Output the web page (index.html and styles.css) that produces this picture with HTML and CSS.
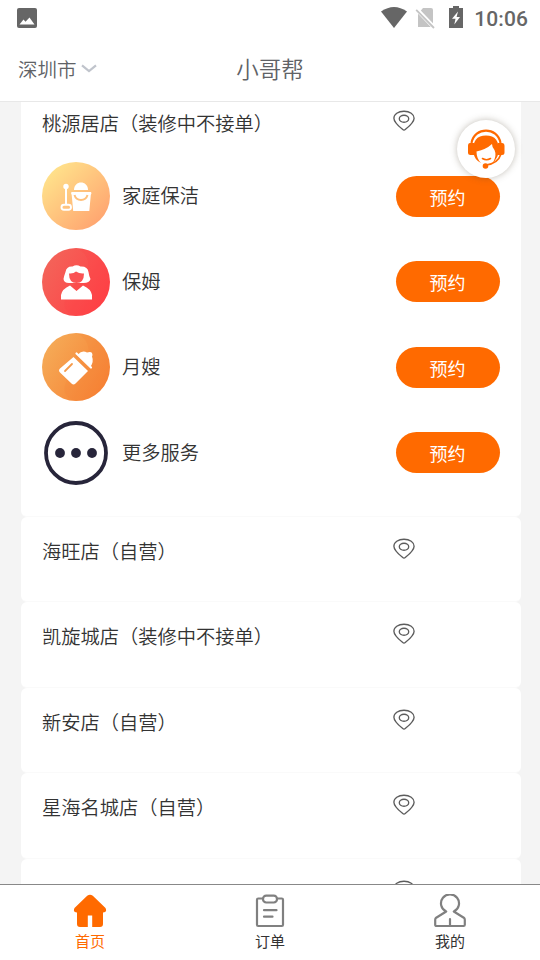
FILE: index.html
```html
<!DOCTYPE html>
<html lang="zh-CN">
<head>
<meta charset="utf-8">
<title>小哥帮</title>
<link rel="stylesheet" href="styles.css">
</head>
<body>
<svg class="defs" width="0" height="0" aria-hidden="true">
  <symbol id="pin" viewBox="0 0 22 21">
    <path d="M11 1.200C5.200 1.200.9 4.200.9 8.200c0 4.200 5 8.200 8.800 11.300q1.300 1 2.600 0c3.800-3.100 8.800-7.100 8.800-11.300 0-4-4.300-7-10.100-7z"/>
    <ellipse cx="11" cy="8.700" rx="4.700" ry="3.500"/>
  </symbol>
</svg>
<div class="app">
  <div class="status">
    <svg class="pic" viewBox="0 0 20 20"><rect width="20" height="20" rx="2" fill="#666"/><path d="M2.500 16.500l4-5 2 2.300L12.500 9.500l5 7z" fill="#fff"/></svg>
    <svg class="wifi" viewBox="0 0 26 21"><path d="M0 4.500Q13-4.500 26 4.500L13 21z" fill="#666"/></svg>
    <svg class="sim" viewBox="0 0 20 21"><path d="M2 6l5-6h8q2 0 2 2v17H2z" fill="#c4c4c4"/><path d="M-.5 0L20 21.500" stroke="#fff" stroke-width="4"/><path d="M.2 1.800L18 20" stroke="#c4c4c4" stroke-width="1.800"/></svg>
    <svg class="battery" viewBox="0 0 14 22"><path d="M0 2h4V0h6v2h4v20H0z" fill="#666"/><path d="M9 5.500L3 12.800h3.500L5.300 18.500 11 11H7.600z" fill="#fff"/></svg>
    <span class="time">10:06</span>
  </div>
  <header class="header">
    <div class="city"><span>深圳市</span><svg viewBox="0 0 16 9"><path d="M1 1.300l7 5.800 7-5.800"/></svg></div>
    <h1>小哥帮</h1>
  </header>
  <main class="list">
    <section class="card open">
      <div class="store"><span>桃源居店（装修中不接单）</span><svg class="pin"><use href="#pin"/></svg></div>
      <div class="service">
        <svg class="avatar" viewBox="0 0 68 68">
          <defs><linearGradient id="g1" x1="0.150" y1="0.150" x2="0.850" y2="0.850"><stop stop-color="#ffe08a"/><stop offset="1" stop-color="#ffa771"/></linearGradient></defs>
          <circle cx="34" cy="34" r="34" fill="url(#g1)"/>
          <g fill="#fff"><circle cx="24" cy="24.500" r="2.700"/><path d="M23 24h2v18h-2z"/><path d="M32 28c0-10 14-10 14 0z"/><path d="M29.500 30h19.500q1 1-.200 3L47.300 49H31.200L29.700 33q-1.200-2-.2-3z"/></g>
          <rect x="19.500" y="42.700" width="9.500" height="5" rx="2.500" fill="none" stroke="#fff" stroke-width="1.900"/>
          <path d="M32.500 33q1.500 5 6.500 5t6.500-5" fill="none" stroke="#ffc17d" stroke-width="2"/>
        </svg>
        <span class="name">家庭保洁</span><button>预约</button>
      </div>
      <div class="service">
        <svg class="avatar" viewBox="0 0 68 68">
          <defs><linearGradient id="g2" x1="0" y1="0.200" x2="1" y2="0.800"><stop stop-color="#f3655a"/><stop offset="1" stop-color="#ff3e44"/></linearGradient></defs>
          <circle cx="34" cy="34" r="34" fill="url(#g2)"/>
          <path d="M34 0c12 5 16 17 9 26S20 45 23 60q3 6 11 8C78 66 79 2 34 0z" fill="#ff3f48" opacity=".2"/>
          <path d="M28 35q-6 .500-6.500-4 .500-3 2-7 1-6 7-5.500 4-2.500 8 0 7-.500 8 5.500 .500 4 2 7-1 4-7 4z" fill="#fff"/>
          <path d="M27 25.500q4.500.500 7-2 3.500 2.500 8 2Q42 35 34.500 35T27 25.500z" fill="#fa5354"/>
          <path d="M19 51.500V47q1-6 9-9.500l6.500 5.500L41 37.500q8 3.500 9 9.500v4.500z" fill="#fff"/>
        </svg>
        <span class="name">保姆</span><button>预约</button>
      </div>
      <div class="service">
        <svg class="avatar" viewBox="0 0 68 68">
          <defs><linearGradient id="g3" x1="0" y1="0.200" x2="1" y2="0.800"><stop stop-color="#f5ac58"/><stop offset="1" stop-color="#f77f32"/></linearGradient></defs>
          <circle cx="34" cy="34" r="34" fill="url(#g3)"/>
          <path d="M34 0c12 5 16 17 9 26S20 45 23 60q3 6 11 8C78 66 79 2 34 0z" fill="#f78235" opacity=".2"/>
          <g fill="#fff"><path d="M31.500 24L46 38 33.500 50.500q-2 2-4 0L18 39.500q-2-2 0-4z"/><path d="M36 21.500q4-4.500 9-2 4-1 5 .500 1 2 0 3.500 2 5-1.500 10.500z"/></g>
          <path d="M34 22.500L47 35.500" stroke="#f79242" stroke-width="1.200"/>
          <path d="M34.500 20.500L49 34.500" stroke="#fff" stroke-width="2.200" stroke-linecap="round"/>
          <path d="M23 38l7-7" stroke="#f59a49" stroke-width="1.800" stroke-linecap="round"/>
        </svg>
        <span class="name">月嫂</span><button>预约</button>
      </div>
      <div class="service">
        <svg class="avatar" viewBox="0 0 68 68">
          <circle cx="34" cy="34" r="30" fill="none" stroke="#27253a" stroke-width="3.800"/>
          <g fill="#27253a"><circle cx="18" cy="34" r="4.900"/><circle cx="34" cy="34" r="4.900"/><circle cx="50" cy="34" r="4.900"/></g>
        </svg>
        <span class="name">更多服务</span><button>预约</button>
      </div>
    </section>
    <section class="card"><div class="store"><span>海旺店（自营）</span><svg class="pin"><use href="#pin"/></svg></div></section>
    <section class="card"><div class="store"><span>凯旋城店（装修中不接单）</span><svg class="pin"><use href="#pin"/></svg></div></section>
    <section class="card"><div class="store"><span>新安店（自营）</span><svg class="pin"><use href="#pin"/></svg></div></section>
    <section class="card"><div class="store"><span>星海名城店（自营）</span><svg class="pin"><use href="#pin"/></svg></div></section>
    <section class="card"><div class="store"><span>前海店（自营）</span><svg class="pin"><use href="#pin"/></svg></div></section>
  </main>
  <nav class="tabs">
    <a class="tab active">
      <svg viewBox="0 0 34 34"><path d="M14.200 1.700q2.800-2 5.600 0L32.500 14q2 4-2.500 4.500V30q0 3-3 3h-7.800V21.500h-4.400V33H7q-3 0-3-3V18.500Q-.5 18 1.500 14z" fill="#ff6a00"/></svg>
      <span>首页</span>
    </a>
    <a class="tab">
      <svg class="line" viewBox="0 0 34 34"><path d="M10 4.500H5.200Q4 4.500 4 5.700v25.100Q4 32 5.200 32h23.600q1.200 0 1.200-1.200V5.700Q30 4.500 28.800 4.500H24"/><rect x="10" y="1.700" width="14" height="6.800" rx="3.200"/><path d="M11 16.200h12.500M11 22.700h8.500"/></svg>
      <span>订单</span>
    </a>
    <a class="tab">
      <svg class="line" viewBox="0 0 34 34"><path d="M13.200 17.500a9 9 0 1 1 7.600 0l10 6.200q1 .800 1 2v5q0 1.300-1.300 1.300h-27q-1.300 0-1.300-1.300v-5q0-1.200 1-2zM17 25v7"/></svg>
      <span>我的</span>
    </a>
  </nav>
  <div class="support">
    <svg viewBox="0 0 38 40">
      <g fill="none" stroke="#ff6a00"><path d="M4.500 14C7.500-2.500 30.500-2.500 33.500 14" stroke-width="2.200"/><path d="M34 25q-3 9.500-15 11" stroke-width="1.700"/><path d="M15.500 29.500q4 2.500 8 0" stroke-width="1.600" stroke-linecap="round"/></g>
      <g fill="#ff6a00"><path d="M3 14h4v12H3.500Q1 26 1 23.500v-6.500Q1 14 3 14zM31 14h4q2.500 0 2.500 3v6.500q0 2.500-2.500 2.500h-4z"/><path d="M6.500 24C5 12 10 6.500 19 6.500s14 5.500 12.500 17.500q-1.500 6-5.500 9.500 4-7 1.500-12.500-2.500-2.500-2.500-6Q19 20.500 9.500 22.500q0 7 4.500 11.500-6.500-3-7.500-10z"/><circle cx="18.500" cy="37" r="2.800"/></g>
    </svg>
  </div>
</div>
</body>
</html>
```

FILE: styles.css
```css
* { box-sizing: border-box; }
body { margin: 0; background: #f4f4f4; font-family: "Noto Sans CJK SC", sans-serif; font-weight: 350; color: #333; }
.defs { position: absolute; }
.app { position: relative; display: flex; flex-direction: column; height: 960px; overflow: hidden; }
.status { display: flex; flex: none; align-items: center; height: 36px; padding: 0 12px 0 17px; background: #fff; }
.pic { width: 20px; height: 20px; margin-right: auto; }
.wifi { width: 26px; height: 21px; margin: -2px 9px 0 0; }
.sim { width: 20px; height: 21px; margin-right: 13px; overflow: visible; }
.battery { width: 14px; height: 22px; margin: -2px 11px 0 0; }
.time { font: 500 21px/36px Roboto, sans-serif; color: #666; padding-top: 2px; letter-spacing: .1px; }
.header { display: grid; grid-template-columns: 1fr auto 1fr; flex: none; align-items: center; height: 66px; padding: 0 18px 1px; background: #fff; border-bottom: 1px solid #e8e8e8; color: #606266; }
.city { display: flex; align-items: center; gap: 4px; padding-top: 1px; font-size: 19.500px; }
.city svg { width: 16px; height: 9px; fill: none; stroke: #c0c4cc; stroke-width: 2.200; }
.header h1 { margin: 0; font-size: 22.500px; font-weight: 350; }
.list { flex: 1; min-height: 0; overflow: hidden; padding: 0 19.500px 0 21px; }
.card { height: 85.500px; padding: 21px 21px 0; border-radius: 6px; background: #fff; border-bottom: 1px solid #fafafa; }
.card.open { height: 428px; margin-top: -13.500px; }
.store { display: flex; align-items: flex-start; height: 28px; font-size: 19.250px; line-height: 26px; }
.store span { width: 351px; white-space: nowrap; }
.pin { width: 22px; height: 21px; fill: none; stroke: #5c5c5c; stroke-width: 1.350; }
.service { display: flex; align-items: center; height: 85.500px; }
.store + .service { margin-top: 16px; }
.avatar { width: 68px; height: 68px; margin-right: 12px; }
.name { flex: 1; padding-bottom: 2px; font-size: 19.250px; }
button { width: 104px; height: 41px; padding: 1px 0 0; border: 0; border-radius: 21px; background: #ff6a00; color: #fff; font: 400 18px/40px "Noto Sans CJK SC", sans-serif; }
.tabs { display: grid; grid-template-columns: repeat(3, 1fr); flex: none; height: 76px; border-top: 1px solid #888; background: #fff; }
.tab { display: flex; flex-direction: column; align-items: center; padding-top: 9px; font-size: 15px; line-height: 22px; font-weight: 400; }
.tab svg { width: 34px; height: 34px; margin-bottom: 2px; }
.line { fill: none; stroke: #808080; stroke-width: 2.200; stroke-linejoin: round; stroke-linecap: round; }
.active { color: #ff6a00; }
.support { position: absolute; left: 457px; top: 120px; display: flex; align-items: center; justify-content: center; width: 58px; height: 58px; border-radius: 50%; background: #fff; box-shadow: 0 0 7px rgba(80,70,50,.35); }
.support svg { width: 38px; height: 40px; }
```
